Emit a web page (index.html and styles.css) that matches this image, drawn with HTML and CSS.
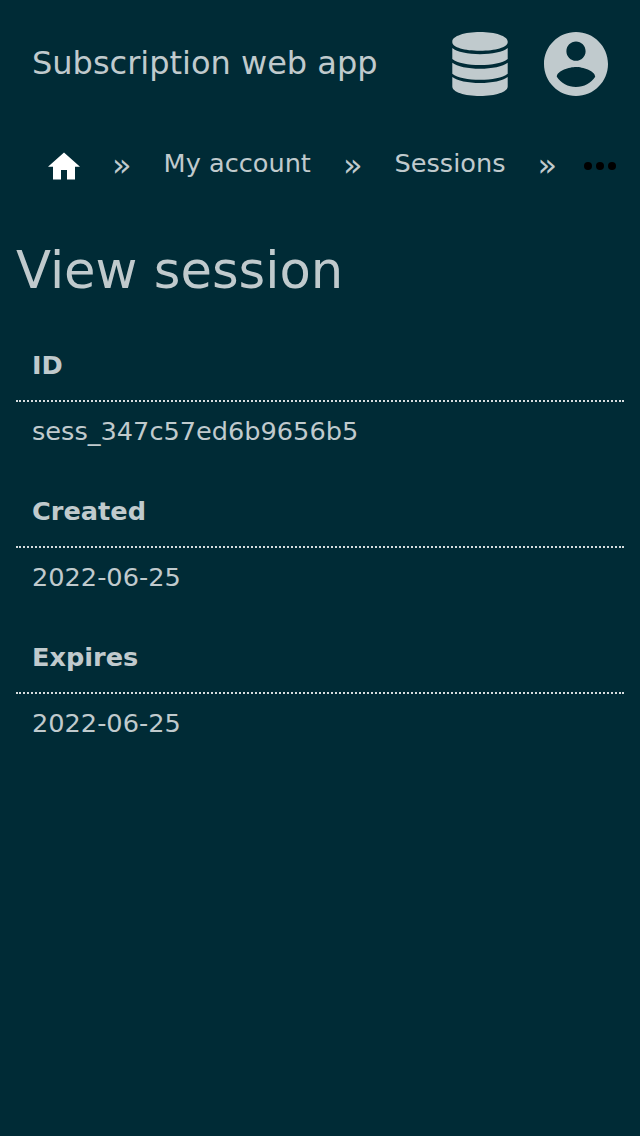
FILE: index.html
```html
<!DOCTYPE html>
<html lang="en">
<head>
<meta charset="utf-8">
<title>View session</title>
<link rel="stylesheet" href="styles.css">
</head>
<body>
<header class="header">
  <div class="brand">Subscription web app</div>
  <div class="actions">
    <svg class="icon" viewBox="0 0 64 64"><path d="M4.300 9.500C4.300 4.100 16.700 0 32 0s27.700 4.100 27.700 9.500v.7C59.700 15.200 47.300 18.700 32 18.700S4.300 15.200 4.300 10.200zM4.300 16C9 20 20 22.200 32 22.200S55 20 59.700 16v11c-5 4-16 6-27.700 6S9.300 31 4.300 27zM4.300 30.700C9 34.500 20 36.700 32 36.700s23-2.200 27.700-6v11c-5 4-16 6-27.700 6S9.300 45.700 4.300 41.700zM4.300 45C9 48.800 20 51 32 51s23-2.200 27.700-6v9.500C59.700 60 47.300 64 32 64S4.300 60 4.300 54.500z"/></svg>
    <svg class="icon" viewBox="2 2 20 20"><path d="M12 2C6.480 2 2 6.480 2 12s4.480 10 10 10 10-4.480 10-10S17.520 2 12 2zm0 3c1.660 0 3 1.340 3 3s-1.340 3-3 3-3-1.340-3-3 1.340-3 3-3zm0 14.200c-2.500 0-4.710-1.280-6-3.220.030-1.990 4-3.080 6-3.080 1.990 0 5.970 1.090 6 3.080-1.290 1.940-3.500 3.220-6 3.220z"/></svg>
  </div>
</header>
<nav class="crumbs">
  <svg class="home" viewBox="0 0 32 27"><path d="M13 27V17.500h6V27h8V14.300h5L16 0 0 14.300h5V27z"/></svg>
  <span class="sep">»</span>
  <span class="crumb">My account</span>
  <span class="sep">»</span>
  <span class="crumb">Sessions</span>
  <span class="sep">»</span>
  <svg class="more" viewBox="0 0 32 8"><circle cx="4" cy="4" r="4"/><circle cx="16" cy="4" r="4"/><circle cx="28" cy="4" r="4"/></svg>
</nav>
<main class="main">
  <h1 class="title">View session</h1>
  <dl class="list">
    <dt class="term">ID</dt><dd class="value">sess_347c57ed6b9656b5</dd>
    <dt class="term">Created</dt><dd class="value">2022-06-25</dd>
    <dt class="term">Expires</dt><dd class="value">2022-06-25</dd>
  </dl>
</main>
</body>
</html>
```

FILE: styles.css
```css
* { box-sizing: border-box; }
body { margin: 0; min-height: 1136px; background: #002b36; color: #c0cacd; font: 25.6px/34px "DejaVu Sans", sans-serif; }
.header { display: flex; justify-content: space-between; align-items: center; height: 128px; padding: 0 32px; }
.brand { font-size: 32px; line-height: 38px; padding-bottom: 2px; }
.actions { display: flex; gap: 32px; }
.icon { width: 64px; height: 64px; fill: #c0cacd; }
.crumbs { display: flex; align-items: center; height: 70px; padding-left: 48px; }
.home { flex: none; width: 32px; height: 28px; fill: #fff; margin-top: 6px; }
.sep { font-size: 32px; margin: 0 32px; padding-top: 4px; }
.more { flex: none; width: 32px; height: 8px; margin: 6px 0 0 -5px; }
.main { padding: 0 16px; }
.title { margin: 42px 0; font-size: 51.2px; line-height: 60px; font-weight: 400; }
.list { margin: 0; }
.term { height: 60px; padding: 6px 16px; font-weight: 700; border-bottom: 2px dotted #d5dcde; }
.value { margin: 0; height: 86px; padding: 12px 16px; }
```
